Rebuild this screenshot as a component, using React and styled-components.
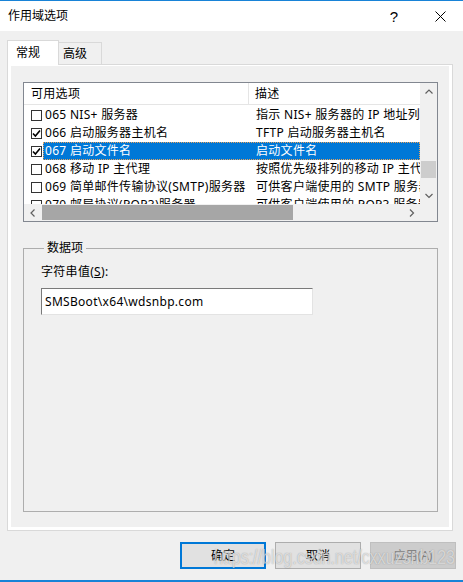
import React from 'react';
import styled, { createGlobalStyle } from 'styled-components';

const GlobalStyle = createGlobalStyle`
  html, body {
    margin: 0;
    padding: 0;
    background: #f0f0f0;
  }
  body {
    font-family: "Noto Sans", "Noto Sans CJK SC", sans-serif;
    font-size: 12px;
    letter-spacing: 0.3px;
    color: #000;
  }
  * { box-sizing: border-box; }
`;

const Window = styled.div`
  position: relative;
  width: 463px;
  height: 582px;
  display: flex;
  flex-direction: column;
  background: #f0f0f0;
  border-top: 1px solid #1883d7;
  border-bottom: 2px solid #1883d7;
  overflow: hidden;
`;

const TitleBar = styled.div`
  height: 30px;
  flex: none;
  display: flex;
  align-items: center;
  background: #fff;
  padding-left: 8px;
`;

const Title = styled.div`
  flex: 1;
  line-height: 16px;
  letter-spacing: 0;
`;

const TitleButton = styled.div`
  width: 46px;
  height: 30px;
  display: flex;
  align-items: center;
  justify-content: center;
  font-family: "Liberation Sans", sans-serif;
  font-size: 15px;
`;

const Body = styled.div`
  flex: 1;
  display: flex;
  flex-direction: column;
  padding: 9px 7px 0 7px;
  min-height: 0;
`;

const TabRow = styled.div`
  height: 24px;
  flex: none;
  display: flex;
  align-items: flex-end;
  position: relative;
  z-index: 1;
`;

const Tab = styled.div`
  height: ${p => (p.$active ? '25px' : '22px')};
  width: ${p => p.$w}px;
  margin-bottom: ${p => (p.$active ? '-1px' : '0')};
  padding-left: ${p => p.$pad}px;
  display: flex;
  align-items: center;
  background: ${p => (p.$active ? '#fff' : '#f0f0f0')};
  border: 1px solid #d9d9d9;
  border-bottom: none;
  border-left: ${p => (p.$active ? '1px solid #d9d9d9' : 'none')};
  line-height: 16px;
  letter-spacing: 0;
`;

const Panel = styled.div`
  flex: 1;
  display: flex;
  margin-right: 3px;
  background: #fff;
  border: 1px solid #d9d9d9;
  padding: 1px 3px 3px 3px;
  min-height: 0;
`;

const PanelInner = styled.div`
  flex: 1;
  display: flex;
  flex-direction: column;
  background: #f0f0f0;
  padding: 16px 11px 15px 12px;
`;

const ListBox = styled.div`
  height: 140px;
  flex: none;
  display: grid;
  grid-template-columns: 1fr 17px;
  grid-template-rows: 1fr 17px;
  border: 1px solid #828790;
  background: #fff;
`;

const ListContent = styled.div`
  min-width: 0;
  overflow: hidden;
`;

const Header = styled.div`
  height: 22px;
  display: flex;
  border-bottom: 1px solid #e5e5e5;
  line-height: 16px;
`;

const HeaderCell = styled.div`
  display: flex;
  align-items: center;
  width: ${p => (p.$w ? `${p.$w}px` : 'auto')};
  flex: ${p => (p.$w ? 'none' : '1')};
  padding-left: ${p => p.$pad}px;
  border-right: ${p => (p.$w ? '1px solid #e5e5e5' : 'none')};
  white-space: nowrap;
`;

const Rows = styled.div`
  padding-top: 1px;
`;

const Row = styled.div`
  height: 18px;
  display: flex;
  align-items: center;
  line-height: 16px;
`;

const CheckCell = styled.div`
  width: 19px;
  flex: none;
  padding-left: 7px;
  display: flex;
  align-items: center;
`;

const CheckBox = styled.div`
  width: 11px;
  height: 11px;
  border: 1px solid #333;
  background: #fff;
  display: flex;
  align-items: center;
  justify-content: center;
`;

const RowMain = styled.div`
  flex: 1;
  height: 18px;
  display: flex;
  align-items: center;
  background: ${p => (p.$selected ? '#0078d7' : 'transparent')};
  color: ${p => (p.$selected ? '#fff' : '#000')};
  outline: ${p => (p.$selected ? '1px dotted #e8a35c' : 'none')};
  outline-offset: -1px;
`;

const Cell = styled.div`
  width: ${p => (p.$w ? `${p.$w}px` : 'auto')};
  flex: ${p => (p.$w ? 'none' : '1')};
  padding-left: ${p => p.$pad}px;
  white-space: nowrap;
  overflow: hidden;
`;

const VScroll = styled.div`
  display: flex;
  flex-direction: column;
  background: #f0f0f0;
`;

const HScroll = styled.div`
  display: flex;
  align-items: center;
  background: #f0f0f0;
`;

const ArrowButton = styled.div`
  width: 17px;
  height: 17px;
  flex: none;
  display: flex;
  align-items: center;
  justify-content: center;
`;

const VTrack = styled.div`
  flex: 1;
  padding-top: 61px;
`;

const HTrack = styled.div`
  flex: 1;
  height: 17px;
  display: flex;
  align-items: center;
  padding-left: 1px;
`;

const Thumb = styled.div`
  background: ${p => p.$color};
  width: ${p => p.$w};
  height: ${p => p.$h};
  margin: ${p => p.$m};
`;

const Corner = styled.div`
  background: #f0f0f0;
`;

const GroupBox = styled.fieldset`
  flex: 1;
  margin: 18px 0 0 0;
  padding: 0 0 0 17px;
  border: 1px solid #adadad;
  min-width: 0;
`;

const Legend = styled.legend`
  margin-left: 3px;
  padding: 0 3px;
  line-height: 16px;
  letter-spacing: 0;
`;

const FieldLabel = styled.div`
  margin-top: 8px;
  line-height: 16px;
  u { text-decoration: underline; }
`;

const TextField = styled.div`
  margin-top: 8px;
  width: 272px;
  height: 27px;
  display: flex;
  align-items: center;
  padding-left: 3px;
  background: #fff;
  border: 1px solid;
  border-color: #7a7a7a #e3e3e3 #e3e3e3 #7a7a7a;
  font-size: 12px;
  line-height: 16px;
`;

const ButtonRow = styled.div`
  height: 27px;
  flex: none;
  margin: 11px 0 11px 0;
  display: flex;
  justify-content: flex-end;
  gap: 9px;
`;

const Button = styled.div`
  width: 86px;
  height: 27px;
  display: flex;
  align-items: center;
  justify-content: center;
  line-height: 16px;
  letter-spacing: 0;
  background: ${p => (p.$disabled ? '#cccccc' : '#e1e1e1')};
  color: ${p => (p.$disabled ? '#838383' : '#000')};
  border: ${p => (p.$default ? '2px solid #0078d7' : p.$disabled ? '1px solid #bfbfbf' : '1px solid #adadad')};
`;

const Watermark = styled.div`
  position: absolute;
  right: 8px;
  bottom: 13px;
  font-family: "Liberation Sans", sans-serif;
  font-size: 16px;
  letter-spacing: 0;
  transform: scaleY(1.25);
  color: rgba(255, 255, 255, 0.6);
  text-shadow: 0 0 1px rgba(90, 90, 90, 0.55);
  pointer-events: none;
`;

const Chevron = ({ dir }) => {
  const paths = {
    up: 'M0.5 4.5 L4 1 L7.5 4.5',
    down: 'M0.5 1 L4 4.5 L7.5 1',
    left: 'M4.5 0.5 L1 4 L4.5 7.5',
    right: 'M1 0.5 L4.5 4 L1 7.5',
  };
  const vertical = dir === 'up' || dir === 'down';
  return (
    <svg width={vertical ? 8 : 6} height={vertical ? 6 : 8} viewBox={vertical ? '0 0 8 6' : '0 0 6 8'}>
      <path d={paths[dir]} fill="none" stroke="#606060" strokeWidth="1.2" />
    </svg>
  );
};

const CheckMark = () => (
  <svg width="9" height="9" viewBox="0 0 9 9">
    <path d="M1 4.5 L3.4 7 L8 1.5" fill="none" stroke="#000" strokeWidth="1.6" />
  </svg>
);

const CloseIcon = () => (
  <svg width="11" height="11" viewBox="0 0 11 11">
    <path d="M0.5 0.5 L10.5 10.5 M10.5 0.5 L0.5 10.5" stroke="#000" strokeWidth="1" />
  </svg>
);

const options = [
  { name: '065 NIS+ 服务器', desc: '指示 NIS+ 服务器的 IP 地址列表，按优先顺序排列' },
  { name: '066 启动服务器主机名', desc: 'TFTP 启动服务器主机名', checked: true },
  { name: '067 启动文件名', desc: '启动文件名', checked: true, selected: true },
  { name: '068 移动 IP 主代理', desc: '按照优先级排列的移动 IP 主代理列表' },
  { name: '069 简单邮件传输协议(SMTP)服务器', desc: '可供客户端使用的 SMTP 服务器列表' },
  { name: '070 邮局协议(POP3)服务器', desc: '可供客户端使用的 POP3 服务器列表' },
];

export default function App() {
  return (
    <>
      <GlobalStyle />
      <Window>
        <TitleBar>
          <Title>作用域选项</Title>
          <TitleButton>?</TitleButton>
          <TitleButton><CloseIcon /></TitleButton>
        </TitleBar>
        <Body>
          <TabRow>
            <Tab $active $w={52} $pad={8}>常规</Tab>
            <Tab $w={43} $pad={4}>高级</Tab>
          </TabRow>
          <Panel>
            <PanelInner>
              <ListBox>
                <ListContent>
                  <Header>
                    <HeaderCell $w={225} $pad={7}>可用选项</HeaderCell>
                    <HeaderCell $pad={6}>描述</HeaderCell>
                  </Header>
                  <Rows>
                    {options.map(o => (
                      <Row key={o.name}>
                        <CheckCell>
                          <CheckBox>{o.checked && <CheckMark />}</CheckBox>
                        </CheckCell>
                        <RowMain $selected={o.selected}>
                          <Cell $w={206} $pad={2}>{o.name}</Cell>
                          <Cell $pad={7}>{o.desc}</Cell>
                        </RowMain>
                      </Row>
                    ))}
                  </Rows>
                </ListContent>
                <VScroll>
                  <ArrowButton><Chevron dir="up" /></ArrowButton>
                  <VTrack>
                    <Thumb $color="#cdcdcd" $w="15px" $h="17px" $m="0 1px" />
                  </VTrack>
                  <ArrowButton><Chevron dir="down" /></ArrowButton>
                </VScroll>
                <HScroll>
                  <ArrowButton><Chevron dir="left" /></ArrowButton>
                  <HTrack>
                    <Thumb $color="#a6a6a6" $w="251px" $h="15px" $m="0" />
                  </HTrack>
                  <ArrowButton><Chevron dir="right" /></ArrowButton>
                </HScroll>
                <Corner />
              </ListBox>
              <GroupBox>
                <Legend>数据项</Legend>
                <FieldLabel>字符串值(<u>S</u>):</FieldLabel>
                <TextField>SMSBoot\x64\wdsnbp.com</TextField>
              </GroupBox>
            </PanelInner>
          </Panel>
          <ButtonRow>
            <Button $default>确定</Button>
            <Button>取消</Button>
            <Button $disabled>应用(A)</Button>
          </ButtonRow>
        </Body>
        <Watermark>https://blog.csdn.net/cxxuzsnb123</Watermark>
      </Window>
    </>
  );
}
